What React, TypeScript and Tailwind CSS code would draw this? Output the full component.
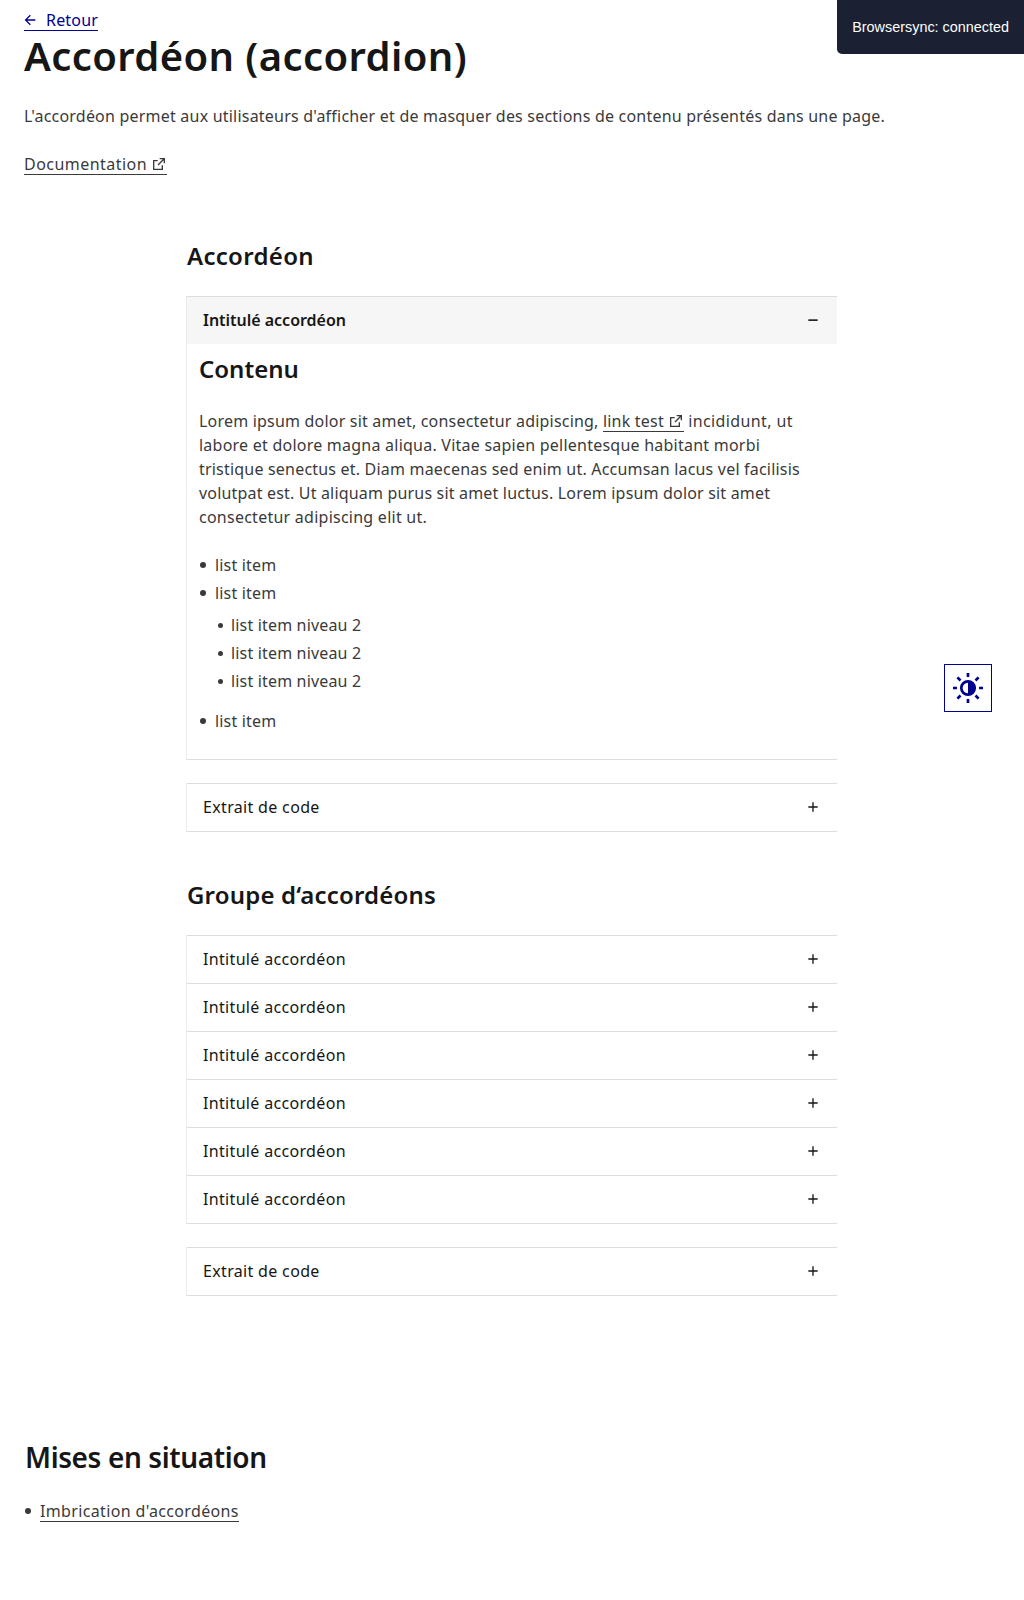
import { useState } from "react";
import type { ReactNode } from "react";

const headingClass = "text-[#161616] font-semibold";

function ExternalIcon() {
  return (
    <svg viewBox="0 0 24 24" className="ml-1 inline-block size-4 align-[-2px]" fill="currentColor" aria-hidden="true">
      <path d="M10 6v2H5v11h11v-5h2v7H3V6h7Zm11-3v8h-2V6.413l-7.793 7.794-1.414-1.414L17.585 5H13V3h8Z" />
    </svg>
  );
}

function Link({ children, className = "" }: { children: ReactNode; className?: string }) {
  return (
    <a href="#" className={`shadow-[inset_0_-1px_0_0_currentColor] ${className}`}>
      {children}
    </a>
  );
}

function Bullet({ children, small = false }: { children: ReactNode; small?: boolean }) {
  return (
    <li className="flex pb-1">
      <span className="flex h-6 w-4 shrink-0 items-center">
        <span className={small ? "ml-[2.5px] mt-px size-[5px] rounded-full bg-[#3a3a3a]" : "ml-[1.25px] mt-[0.5px] size-1.5 rounded-full bg-[#3a3a3a]"} />
      </span>
      <div className="grow">{children}</div>
    </li>
  );
}

function Accordion({ title, children, initiallyOpen = false, last = true }: { title: string; children?: ReactNode; initiallyOpen?: boolean; last?: boolean }) {
  const [open, setOpen] = useState(initiallyOpen);
  return (
    <section className={`border-l border-l-[#ebebeb] ${last ? "border-b border-b-[#dddddd]" : ""}`}>
      <button
        type="button"
        aria-expanded={open}
        onClick={() => setOpen(!open)}
        className={`flex h-12 w-full items-start justify-between border-t border-[#dddddd] pt-[11px] pr-4 pl-4 text-left text-[#161616] ${open ? "bg-[#f6f6f6] font-semibold tracking-[-0.016px]" : "tracking-[0.33px]"}`}
      >
        {title}
        <svg viewBox="0 0 24 24" className="mt-1 size-4" fill="currentColor" aria-hidden="true">
          {open ? <path d="M5 11h14v2.4H5z" /> : <path d="M11 11V5h2v6h6v2h-6v6h-2v-6H5v-2z" />}
        </svg>
      </button>
      {open && <div className="px-3 pt-[9px] pb-[22px]">{children}</div>}
    </section>
  );
}

export default function App() {
  return (
    <div className="relative h-[1600px] bg-white px-6 pt-2 font-['Noto_Sans',sans-serif] text-base leading-6 tracking-[0.2px] text-[#3a3a3a]">
      <div className="absolute top-0 right-0 rounded-bl-[5px] bg-[#1b2032] p-[15px] font-['Liberation_Sans',sans-serif] text-[14.4px] tracking-normal text-white">
        Browsersync: connected
      </div>

      <header>
        <div className="h-6">
          <Link className="inline-flex h-[23px] text-[#000091] tracking-[0.18px]">
            <svg viewBox="0 0 24 24" className="mt-[3.5px] mr-2 -ml-0.5 size-4" fill="currentColor" aria-hidden="true">
              <path d="M7.828 11H20v2H7.828l5.364 5.364-1.414 1.414L4 12l7.778-7.778 1.414 1.414L7.828 11Z" />
            </svg>
            Retour
          </Link>
        </div>
        <h1 className={`text-[40px] leading-[48px] tracking-[0.4px] ${headingClass}`}>Accordéon (accordion)</h1>
        <p className="mt-6 tracking-[0.21px]">
          L'accordéon permet aux utilisateurs d'afficher et de masquer des sections de contenu présentés dans une page.
        </p>
        <p className="mt-6 tracking-[0.46px]">
          <Link>
            Documentation
            <ExternalIcon />
          </Link>
        </p>
      </header>

      <main className="mt-16 ml-[162px] w-[651px]">
        <h2 className={`pl-px text-2xl leading-8 tracking-[0.3px] ${headingClass}`}>Accordéon</h2>
        <div className="mt-6">
          <Accordion title="Intitulé accordéon" initiallyOpen>
            <h3 className={`text-2xl leading-8 tracking-[0px] ${headingClass}`}>Contenu</h3>
            <div className="mt-6 whitespace-nowrap">
              <p className="tracking-[0.2px]">
                Lorem ipsum dolor sit amet, consectetur adipiscing,{" "}
                <Link>
                  link test
                  <ExternalIcon />
                </Link>{" "}
                <span className="tracking-[0.38px]">incididunt, ut</span>
              </p>
              <p className="tracking-[0.235px]">labore et dolore magna aliqua. Vitae sapien pellentesque habitant morbi</p>
              <p className="tracking-[0.2px]">tristique senectus et. Diam maecenas sed enim ut. Accumsan lacus vel facilisis</p>
              <p className="tracking-[0.18px]">volutpat est. Ut aliquam purus sit amet luctus. Lorem ipsum dolor sit amet</p>
              <p className="tracking-[0.25px]">consectetur adipiscing elit ut.</p>
            </div>
            <ul className="mt-6 tracking-[0.17px]">
              <Bullet>list item</Bullet>
              <Bullet>
                list item
                <ul className="mt-2 mb-2">
                  <Bullet small>list item niveau 2</Bullet>
                  <Bullet small>list item niveau 2</Bullet>
                  <Bullet small>list item niveau 2</Bullet>
                </ul>
              </Bullet>
              <Bullet>list item</Bullet>
            </ul>
          </Accordion>
        </div>
        <div className="mt-[23px]">
          <Accordion title="Extrait de code" />
        </div>

        <h2 className={`mt-[47px] pl-px text-2xl leading-8 tracking-[0.18px] ${headingClass}`}>Groupe d‘accordéons</h2>
        <div className="mt-6">
          {[1, 2, 3, 4, 5, 6].map((n) => (
            <Accordion key={n} title="Intitulé accordéon" last={n === 6} />
          ))}
        </div>
        <div className="mt-[23px]">
          <Accordion title="Extrait de code" />
        </div>
      </main>

      <footer className="mt-[143px]">
        <h2 className={`pl-px text-[28px] leading-9 tracking-[-0.38px] ${headingClass}`}>Mises en situation</h2>
        <ul className="mt-6 tracking-[0.35px]">
          <Bullet>
            <Link>Imbrication d'accordéons</Link>
          </Bullet>
        </ul>
      </footer>

      <button type="button" aria-label="Paramètres d’affichage" className="absolute top-[664px] right-8 flex size-12 items-center justify-center border border-[#000091] bg-white text-[#000091]">
        <svg viewBox="-16 -16 32 32" className="size-8" fill="none" stroke="currentColor" strokeWidth="2.7" aria-hidden="true">
          <circle r="6.7" />
          <path d="M0-6.7a6.7 6.7 0 0 1 0 13.4Z" fill="currentColor" stroke="none" />
          <path d="M0-15v4M0 11v4M-15 0h4M11 0h4M-10.6-10.6l3.1 3.1M7.5 7.5l3.1 3.1M10.6-10.6l-3.1 3.1M-7.5 7.5l-3.1 3.1" />
        </svg>
      </button>
    </div>
  );
}
